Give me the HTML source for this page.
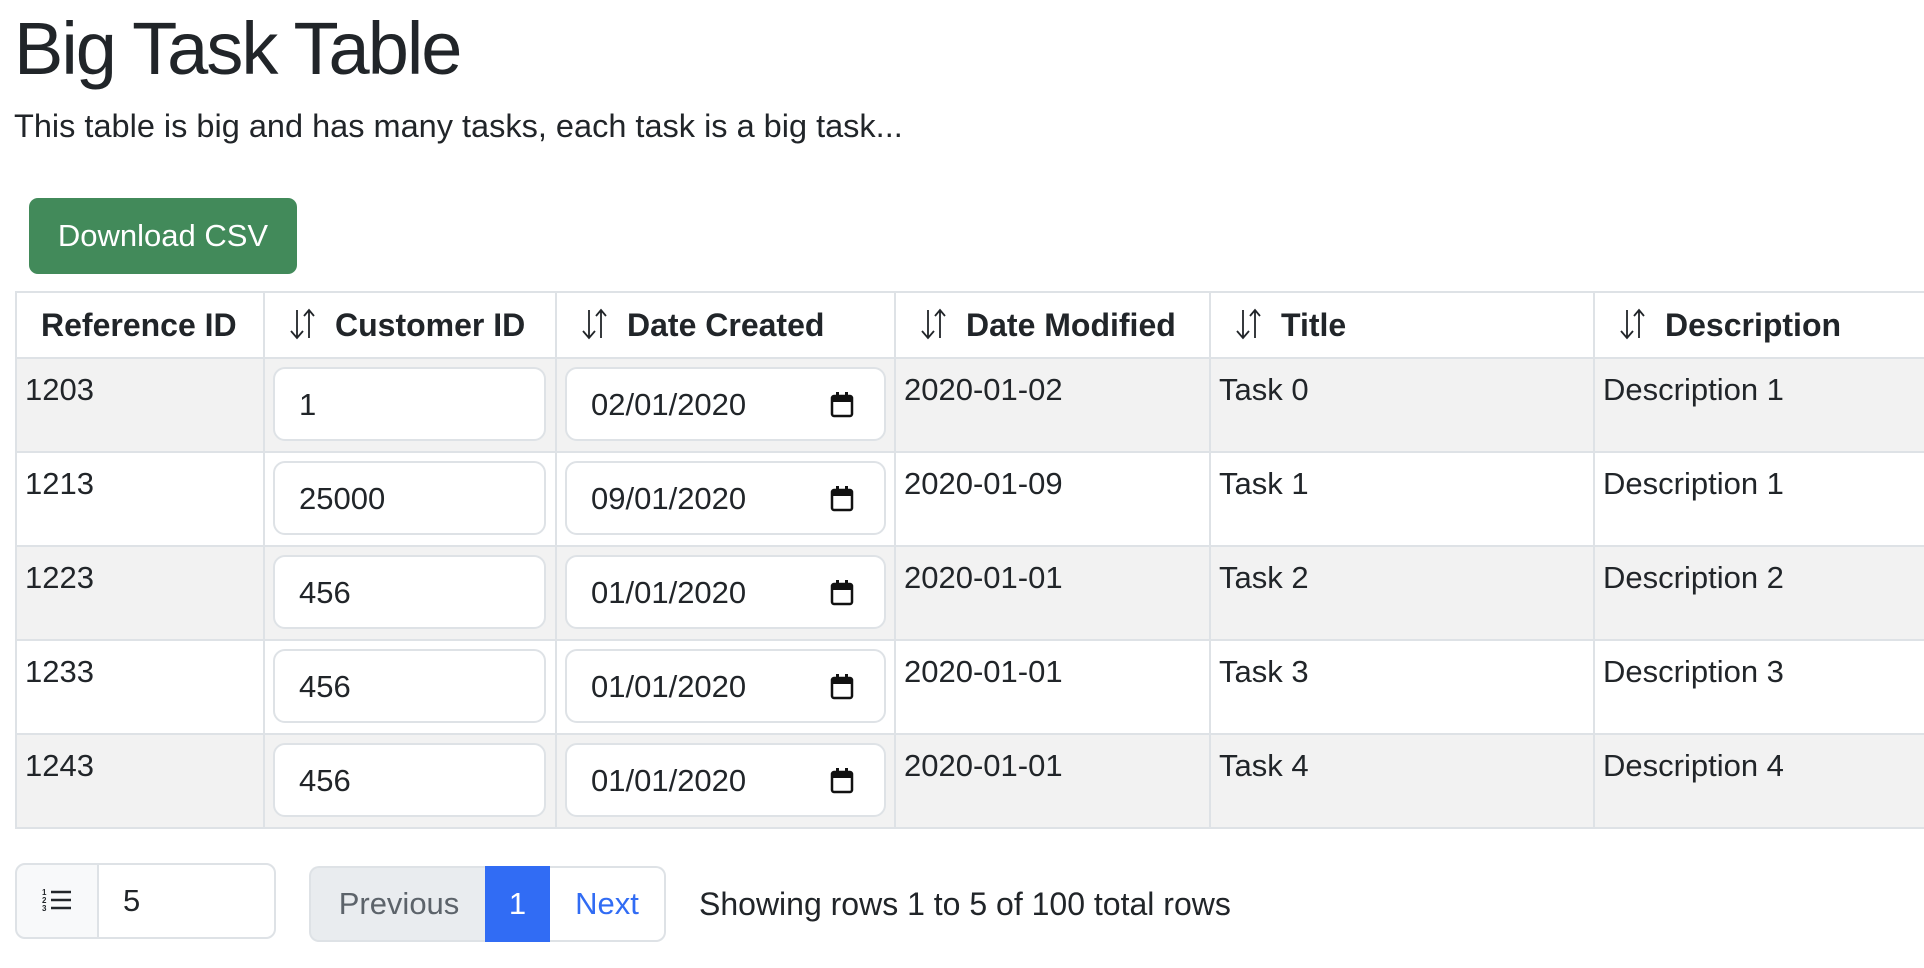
<!DOCTYPE html>
<html><head><meta charset="utf-8"><style>
*{box-sizing:border-box;margin:0;padding:0}
body{width:1924px;height:968px;overflow:hidden;background:#fff;font-family:"Liberation Sans",Arial,sans-serif;color:#212529;position:relative}
.a{position:absolute}
h1{position:absolute;left:14px;top:4px;font-size:74px;font-weight:500;letter-spacing:-2px;color:#212529;line-height:90px}
.p{left:14px;top:106px;font-size:32.5px;line-height:40px}
.btn{left:29px;top:198px;width:268px;height:76px;background:#428a5a;border-radius:9px;color:#fff;font-size:31px;line-height:76px;text-align:center}
table{position:absolute;left:15px;top:291px;border-collapse:collapse;table-layout:fixed;width:2000px}
td,th{border:2px solid #dee2e6;font-size:31px;vertical-align:top;text-align:left}
th{height:66px;vertical-align:middle;font-weight:700;padding:0 16px;font-size:32px}
tr.r{height:94px}
td{padding:14px 8px 0;line-height:34px}
td.i{padding-top:8px}
tr.s td{background:#f2f2f2}
.inp{width:273px;height:74px;background:#fff;border:2px solid #dee2e6;border-radius:12px;padding:0 24px;line-height:72px;font-size:31px;position:relative}
.dt{width:321px}
.cal{position:absolute;right:30px;top:23px}
.sort{display:inline-block;vertical-align:-5px;margin-right:14px;margin-left:6px}
.pg{border:2px solid #dee2e6;font-size:31px;line-height:72px}
</style></head><body>
<h1>Big Task Table</h1>
<div class="a p">This table is big and has many tasks, each task is a big task...</div>
<div class="a btn">Download CSV</div>

<table>
<colgroup><col style="width:248px"><col style="width:292px"><col style="width:339px"><col style="width:315px"><col style="width:384px"><col style="width:422px"></colgroup>
<tr><th style="padding-left:24px">Reference ID</th>
<th><svg class="sort" width="34" height="34" viewBox="0 0 34 34"><path d="M10 3v28M4 24l6 7 6-7M22 31V3M17 9l5-6 5 6" fill="none" stroke="#212529" stroke-width="1.8"/></svg>Customer ID</th>
<th><svg class="sort" width="34" height="34" viewBox="0 0 34 34"><path d="M10 3v28M4 24l6 7 6-7M22 31V3M17 9l5-6 5 6" fill="none" stroke="#212529" stroke-width="1.8"/></svg>Date Created</th>
<th><svg class="sort" width="34" height="34" viewBox="0 0 34 34"><path d="M10 3v28M4 24l6 7 6-7M22 31V3M17 9l5-6 5 6" fill="none" stroke="#212529" stroke-width="1.8"/></svg>Date Modified</th>
<th><svg class="sort" width="34" height="34" viewBox="0 0 34 34"><path d="M10 3v28M4 24l6 7 6-7M22 31V3M17 9l5-6 5 6" fill="none" stroke="#212529" stroke-width="1.8"/></svg>Title</th>
<th><svg class="sort" width="34" height="34" viewBox="0 0 34 34"><path d="M10 3v28M4 24l6 7 6-7M22 31V3M17 9l5-6 5 6" fill="none" stroke="#212529" stroke-width="1.8"/></svg>Description</th></tr>

<tr class="r s"><td>1203</td><td class="i"><div class="inp">1</div></td><td class="i"><div class="inp dt">02/01/2020<svg class="cal" width="24" height="26" viewBox="0 0 24 26"><rect x="2" y="4" width="20" height="20" rx="2" fill="none" stroke="#111" stroke-width="2.5"/><rect x="2" y="4" width="20" height="6" fill="#111"/><rect x="6" y="0" width="3" height="5" fill="#111"/><rect x="15" y="0" width="3" height="5" fill="#111"/></svg></div></td><td>2020-01-02</td><td>Task 0</td><td>Description 1</td></tr>
<tr class="r"><td>1213</td><td class="i"><div class="inp">25000</div></td><td class="i"><div class="inp dt">09/01/2020<svg class="cal" width="24" height="26" viewBox="0 0 24 26"><rect x="2" y="4" width="20" height="20" rx="2" fill="none" stroke="#111" stroke-width="2.5"/><rect x="2" y="4" width="20" height="6" fill="#111"/><rect x="6" y="0" width="3" height="5" fill="#111"/><rect x="15" y="0" width="3" height="5" fill="#111"/></svg></div></td><td>2020-01-09</td><td>Task 1</td><td>Description 1</td></tr>
<tr class="r s"><td>1223</td><td class="i"><div class="inp">456</div></td><td class="i"><div class="inp dt">01/01/2020<svg class="cal" width="24" height="26" viewBox="0 0 24 26"><rect x="2" y="4" width="20" height="20" rx="2" fill="none" stroke="#111" stroke-width="2.5"/><rect x="2" y="4" width="20" height="6" fill="#111"/><rect x="6" y="0" width="3" height="5" fill="#111"/><rect x="15" y="0" width="3" height="5" fill="#111"/></svg></div></td><td>2020-01-01</td><td>Task 2</td><td>Description 2</td></tr>
<tr class="r"><td>1233</td><td class="i"><div class="inp">456</div></td><td class="i"><div class="inp dt">01/01/2020<svg class="cal" width="24" height="26" viewBox="0 0 24 26"><rect x="2" y="4" width="20" height="20" rx="2" fill="none" stroke="#111" stroke-width="2.5"/><rect x="2" y="4" width="20" height="6" fill="#111"/><rect x="6" y="0" width="3" height="5" fill="#111"/><rect x="15" y="0" width="3" height="5" fill="#111"/></svg></div></td><td>2020-01-01</td><td>Task 3</td><td>Description 3</td></tr>
<tr class="r s"><td>1243</td><td class="i"><div class="inp">456</div></td><td class="i"><div class="inp dt">01/01/2020<svg class="cal" width="24" height="26" viewBox="0 0 24 26"><rect x="2" y="4" width="20" height="20" rx="2" fill="none" stroke="#111" stroke-width="2.5"/><rect x="2" y="4" width="20" height="6" fill="#111"/><rect x="6" y="0" width="3" height="5" fill="#111"/><rect x="15" y="0" width="3" height="5" fill="#111"/></svg></div></td><td>2020-01-01</td><td>Task 4</td><td>Description 4</td></tr>
</table>

<div class="a pg" style="left:15px;top:863px;width:84px;height:76px;background:#f8f9fa;border-radius:10px 0 0 10px">
<svg class="a" style="left:25px;top:22px" width="32" height="28" viewBox="0 0 32 28"><text x="0" y="8" font-size="8" font-family="Liberation Sans" font-weight="bold" fill="#212529">1</text><text x="0" y="16" font-size="8" font-family="Liberation Sans" font-weight="bold" fill="#212529">2</text><text x="0" y="24" font-size="8" font-family="Liberation Sans" font-weight="bold" fill="#212529">3</text><path d="M9 5h20M9 13h20M9 21h20" stroke="#212529" stroke-width="2.4"/></svg></div>
<div class="a pg" style="left:97px;top:863px;width:179px;height:76px;background:#fff;border-radius:0 10px 10px 0;padding-left:24px">5</div>

<div class="a pg" style="left:309px;top:866px;width:178px;height:76px;background:#e9ecef;border-radius:10px 0 0 10px;color:#5c636a;text-align:center;border-right:none">Previous</div>
<div class="a" style="left:485px;top:866px;width:65px;height:76px;background:#316cf4;color:#fff;font-size:31px;line-height:76px;text-align:center">1</div>
<div class="a pg" style="left:550px;top:866px;width:116px;height:76px;background:#fff;border-radius:0 10px 10px 0;color:#316cf4;text-align:center;border-left:none">Next</div>
<div class="a" style="left:699px;top:884px;font-size:32px;line-height:40px">Showing rows 1 to 5 of 100 total rows</div>
</body></html>
